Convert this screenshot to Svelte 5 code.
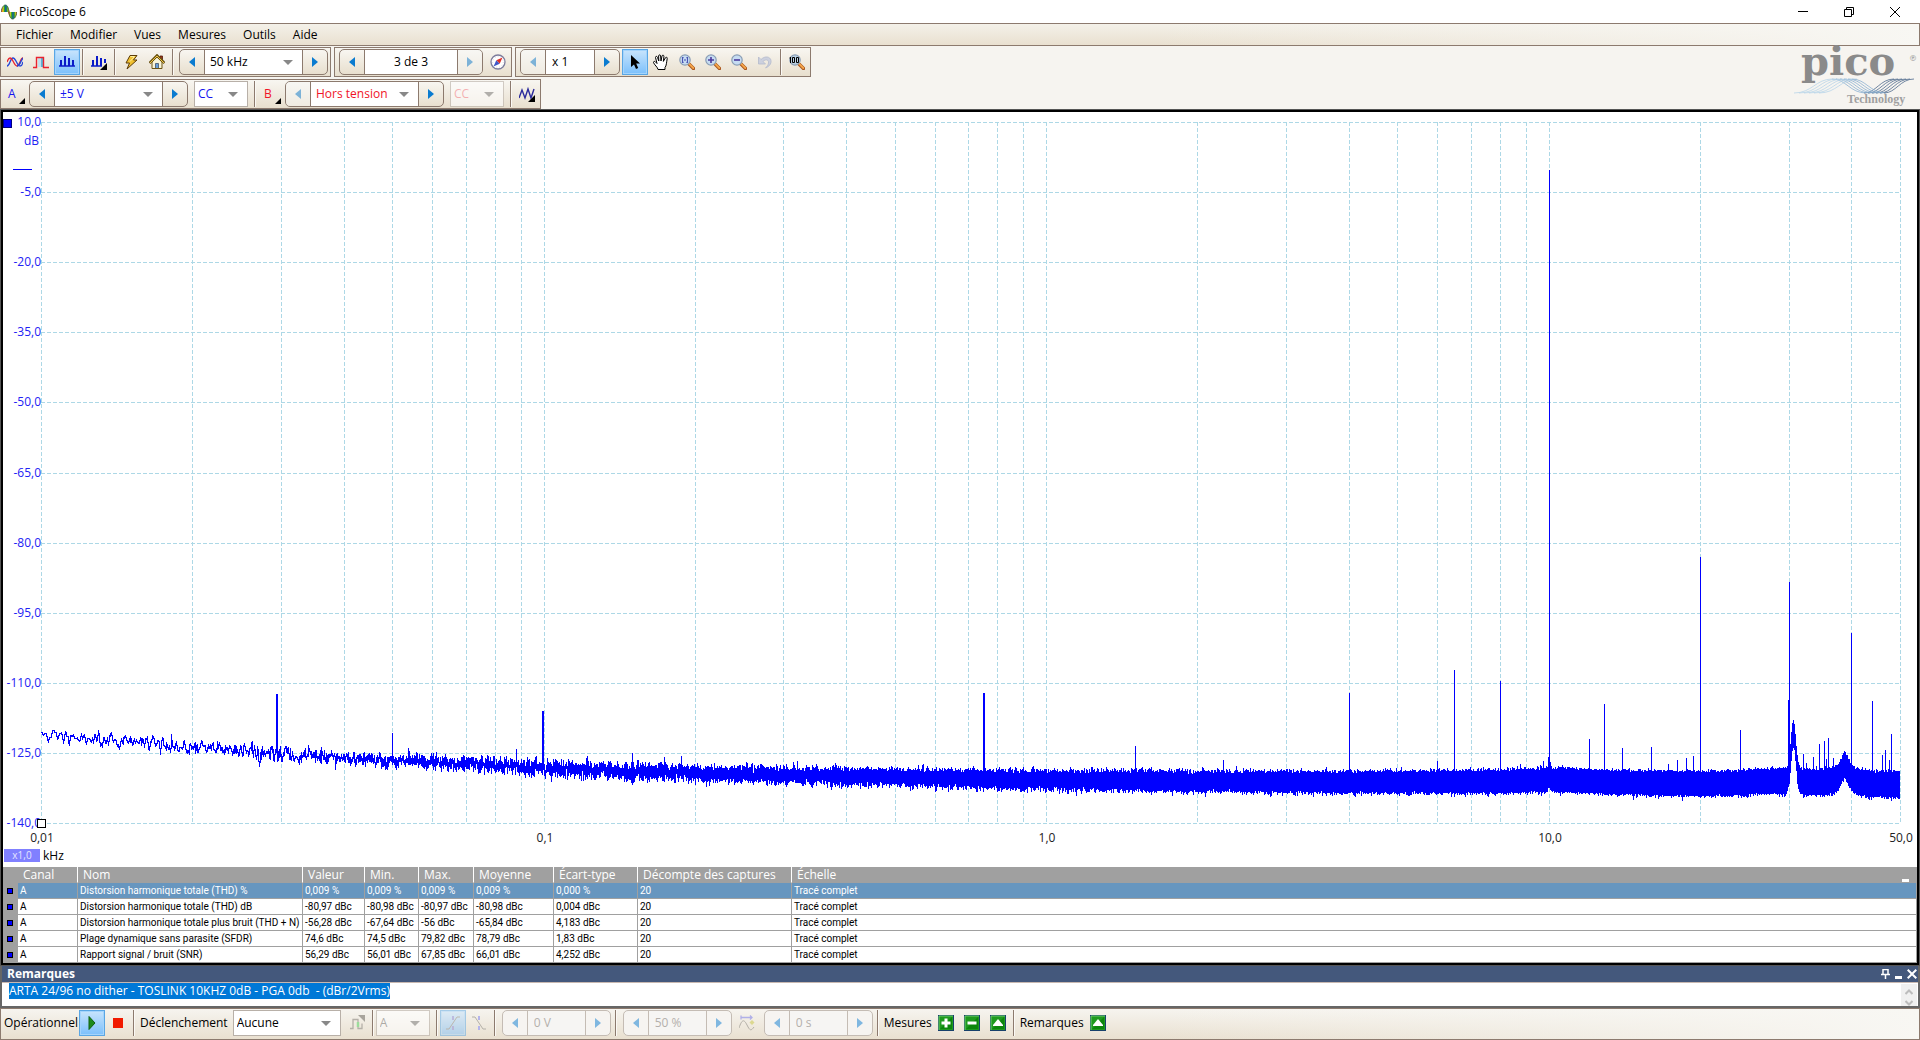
<script>
  import { onMount } from "svelte";

  const menus = ["Fichier", "Modifier", "Vues", "Mesures", "Outils", "Aide"];

  const measurements = [
    ["Distorsion harmonique totale (THD) %", "0,009 %", "0,009 %", "0,009 %", "0,009 %", "0,000 %"],
    ["Distorsion harmonique totale (THD) dB", "-80,97 dBc", "-80,98 dBc", "-80,97 dBc", "-80,98 dBc", "0,004 dBc"],
    ["Distorsion harmonique totale plus bruit (THD + N)", "-56,28 dBc", "-67,64 dBc", "-56 dBc", "-65,84 dBc", "4,183 dBc"],
    ["Plage dynamique sans parasite (SFDR)", "74,6 dBc", "74,5 dBc", "79,82 dBc", "78,79 dBc", "1,83 dBc"],
    ["Rapport signal / bruit (SNR)", "56,29 dBc", "56,01 dBc", "67,85 dBc", "66,01 dBc", "4,252 dBc"],
  ];

  const columns = [
    ["canal", "Canal"],
    ["nom", "Nom"],
    ["valeur", "Valeur"],
    ["min", "Min."],
    ["max", "Max."],
    ["moyenne", "Moyenne"],
    ["ecart", "Écart-type"],
    ["captures", "Décompte des captures"],
  ];

  let remark = $state("ARTA 24/96 no dither - TOSLINK 10KHZ 0dB - PGA 0db  - (dBr/2Vrms)");
  let remarkBox;
  let selectedRow = $state(0);

  // Plot area, in px inside the chart
  const margin = { left: 38, right: 17, top: 10, bottom: 44 };
  let chartWidth = $state(1914);
  let chartHeight = $state(755);

  const F_MIN = 0.01;
  const F_MAX = 50;
  const DB_MAX = 10;
  const DB_MIN = -140;

  let plotWidth = $derived(chartWidth - margin.left - margin.right);
  let plotHeight = $derived(chartHeight - margin.top - margin.bottom);

  const xOf = (f) =>
    margin.left + (Math.log10(f / F_MIN) / Math.log10(F_MAX / F_MIN)) * plotWidth;
  const yOf = (db) => margin.top + ((DB_MAX - db) / (DB_MAX - DB_MIN)) * plotHeight;

  // Centre of the pixel, so that thin lines stay sharp
  const px = (v) => Math.round(v) + 0.5;

  const yTicks = [10, -5, -20, -35, -50, -65, -80, -95, -110, -125, -140];
  const xTicks = [
    [0.01, "0,01"],
    [0.1, "0,1"],
    [1, "1,0"],
    [10, "10,0"],
    [50, "50,0"],
  ];
  const xLines = [];
  for (const decade of [0.01, 0.1, 1, 10]) {
    for (let n = 1; n < 10; n++) {
      if (decade * n <= F_MAX) xLines.push(decade * n);
    }
  }

  // Noise floor: kHz, dB
  const floor = [
    [0.01, -120.6], [0.0117, -121.6], [0.0165, -122.8], [0.02, -123.6], [0.03, -125],
    [0.05, -126.5], [0.068, -127.1], [0.1, -128.1], [0.155, -129], [0.25, -129.4],
    [0.4, -129.9], [0.8, -130.5], [2, -130.9], [5, -131.1], [8, -130.9], [10, -130.6],
    [14, -131.1], [20, -131.4], [24, -131.2], [27.5, -130.8], [31, -131], [36, -131.3], [50, -131.6],
  ];

  // Tones: kHz, dB, line width
  const tones = [
    [0.0294, -112.3, 2], [0.05, -120.7, 1], [0.0883, -124.1, 1], [0.0995, -116, 2], [0.15, -125, 1],
    [0.174, -125.8, 1], [0.188, -125.6, 1], [0.319, -126.7, 1], [0.75, -112.2, 2], [1.5, -123.5, 1],
    [2.25, -126.5, 1], [4, -112.2, 1], [6, -126.7, 1], [6.466, -107.2, 1], [8, -109.6, 1],
    [8.76, -127.3, 1], [9.75, -126.7, 1], [9.96, -125.8, 1], [10, -0.2, 1], [12, -122, 1],
    [12.87, -114.5, 1], [13.98, -123.9, 1], [15.97, -123.7, 1], [17.26, -127.3, 1], [17.98, -126.5, 1],
    [18.74, -126, 1], [19.35, -125.6, 1], [20, -83, 1], [24, -120, 1], [29.9, -113.6, 1],
    [30, -88.4, 1], [32.03, -125.2, 1], [32.48, -127.2, 1], [33.54, -125.8, 1], [34.47, -123.2, 1],
    [35.27, -122.4, 1], [35.59, -126.3, 1], [35.92, -121.8, 1], [36.75, -126, 1], [40, -99.3, 1],
    [43.94, -114, 1], [46, -125.4, 1], [46.64, -124.4, 1], [47.5, -126.5, 1], [47.94, -121, 1],
  ];

  function floorAt(f) {
    let i = 1;
    while (i < floor.length - 1 && floor[i][0] < f) i++;
    const [f0, d0] = floor[i - 1];
    const [f1, d1] = floor[i];
    let db = d0 + ((d1 - d0) * Math.log(f / f0)) / Math.log(f1 / f0);
    db += 0.9 * Math.exp(-Math.pow((f - 10) / 0.09, 2));
    db += 10.2 * Math.exp(-Math.pow((f - 30.62) / 0.5, 2));
    db += 3.9 / (1 + Math.pow((f - 38.72) / 0.9, 2));
    return db;
  }

  // Every FFT bin lands in a pixel column; each column keeps its extremes.
  function buildTrace(width, height) {
    const df = 0.00006;
    const top = new Float64Array(width + 2).fill(Infinity);
    const bottom = new Float64Array(width + 2).fill(-Infinity);
    let seed = 90210;
    const rand = () => {
      seed = (Math.imul(seed, 1664525) + 1013904223) >>> 0;
      return seed / 4294967296;
    };
    let last = 0;
    let prevX = -1;
    let prevY = 0;
    let base = 0;
    let baseX = -1;
    for (let f = F_MIN; f <= F_MAX; f += df) {
      const c = rand() + rand() + rand() + rand() - 2;
      const n = (last * 0.5 + c) * 1.35;
      last = c;
      const x = Math.min(width, Math.floor((Math.log10(f / F_MIN) / Math.log10(F_MAX / F_MIN)) * width));
      if (x !== baseX) {
        base = floorAt(f);
        baseX = x;
      }
      const db = base + (n < 0 ? n * 1.05 : n * 0.95);
      const y = ((DB_MAX - db) / (DB_MAX - DB_MIN)) * height;
      if (prevX >= 0) {
        for (let k = prevX + 1; k < x; k++) {
          const mid = prevY + ((y - prevY) * (k - prevX)) / (x - prevX);
          top[k] = Math.min(top[k], mid);
          bottom[k] = Math.max(bottom[k], mid);
        }
        if (x > prevX) {
          const join = (prevY + y) / 2;
          top[x] = Math.min(top[x], join);
          bottom[x] = Math.max(bottom[x], join);
          top[prevX] = Math.min(top[prevX], join);
          bottom[prevX] = Math.max(bottom[prevX], join);
        }
      }
      top[x] = Math.min(top[x], y);
      bottom[x] = Math.max(bottom[x], y);
      prevX = x;
      prevY = y;
    }
    let d = "";
    for (let x = 0; x < width; x++) {
      if (top[x] === Infinity) continue;
      const y0 = Math.round(top[x]);
      const h = Math.max(1, Math.round(bottom[x]) - y0 + 1);
      d += `M${x + margin.left} ${y0 + margin.top}h1v${h}h-1z`;
    }
    return d;
  }

  let trace = $derived(buildTrace(Math.round(plotWidth), plotHeight));

  const fmt = (v) => v.toFixed(1).replace(".", ",");

  onMount(() => {
    remarkBox.focus();
    remarkBox.select();
  });
</script>

{#snippet arrow(dir)}
  <svg class="arrow" viewBox="0 0 6 10" width="6" height="10">
    <path d={dir === "left" ? "M6 0V10L0 5z" : "M0 0V10L6 5z"} fill="#0a7bd0" />
  </svg>
{/snippet}

{#snippet spin(label, value, size, list, prevOff, nextOff, tone)}
  <div class="spin {size} {tone}" class:off={prevOff && nextOff}>
    <button class:dim={prevOff} aria-label="{label} : précédent" disabled={prevOff}>{@render arrow("left")}</button>
    {#if list}
      <span class="pick">
        <select aria-label={label}><option>{value}</option></select>
      </span>
    {:else}
      <input aria-label={label} {value} disabled={prevOff && nextOff} />
    {/if}
    <button class:dim={nextOff} aria-label="{label} : suivant" disabled={nextOff}>{@render arrow("right")}</button>
  </div>
{/snippet}

{#snippet combo(label, value, size, tone, disabled)}
  <span class="pick boxed {size} {tone}" class:off={disabled}>
    <select aria-label={label} {disabled}><option>{value}</option></select>
  </span>
{/snippet}

{#snippet lens(kind)}
  <svg viewBox="0 0 16 16" width="16" height="16">
    <path d="M9.5 9.5l5 5" stroke="#a8541c" stroke-width="3.4" stroke-linecap="round" />
    <path d="M10 9.6l4.3 4.4" stroke="#f5a64a" stroke-width="1.8" stroke-linecap="round" />
    <circle cx="6" cy="6" r="5.2" fill={kind === "100" ? "#b9cfe2" : "#c6dcf2"} stroke="#8a9db4" stroke-width="1.2" />
    {#if kind === "in"}
      <path d="M6 3v6M3 6h6" stroke="#4b3a9c" stroke-width="1.6" />
    {:else if kind === "out"}
      <path d="M3 6h6" stroke="#4b3a9c" stroke-width="1.6" />
    {:else if kind === "area"}
      <path d="M4.6 3.6H3.5v4.8h1.1M7.4 3.6h1.1v4.8H7.4M6 5v2" fill="none" stroke="#4b56b4" stroke-width="1.1" />
    {:else}
      <path d="M1.5 3v6M0.5 4h1" stroke="#000" fill="none" />
      <path d="M3.5 3.5h2v5h-2zM7.5 3.5h2v5h-2z" fill="none" stroke="#000" />
    {/if}
  </svg>
{/snippet}

{#snippet green(shape)}
  <svg viewBox="0 0 16 16" width="16" height="16">
    <rect x="0.5" y="0.5" width="15" height="15" fill="#1f9a1f" stroke="#17406b" />
    <path d="M1 15V1h14" fill="none" stroke="#6fce6f" />
    <path d="M2 14L14 2v12z" fill="#0c860c" />
    {#if shape === "plus"}
      <path d="M8 3.5v9M3.5 8h9" stroke="#fff" stroke-width="3" />
    {:else if shape === "minus"}
      <path d="M3.5 8h9" stroke="#fff" stroke-width="3" />
    {:else}
      <path d="M8 4l5 6v1H3v-1z" fill="#fff" />
    {/if}
  </svg>
{/snippet}

<div class="app">
  <header class="titlebar">
    <svg viewBox="0 0 16 16" width="16" height="16">
      <defs>
        <linearGradient id="spectrum" x1="0" x2="1">
          <stop offset="0" stop-color="#e02a12" />
          <stop offset="0.25" stop-color="#f0d020" />
          <stop offset="0.42" stop-color="#18a030" />
          <stop offset="0.55" stop-color="#1c50b0" />
          <stop offset="0.7" stop-color="#20a038" />
          <stop offset="0.85" stop-color="#e0c020" />
          <stop offset="1" stop-color="#c02010" />
        </linearGradient>
      </defs>
      <path d="M0 8C1 3 2.500 1 4.500 1S7.500 4 8.500 8z" fill="url(#spectrum)" />
      <path d="M7 8h9c-1 5-2.500 7-4.500 7S8 12 7 8z" fill="url(#spectrum)" />
      <path d="M0 8C1 3 2.500 1 4.500 1s3 3 3.500 7 1.500 7 3.500 7 3.500-2 4.500-7" fill="none" stroke="#286040" stroke-width="0.8" />
    </svg>
    <h1>PicoScope 6</h1>
    <div class="window-buttons">
      <button aria-label="Réduire">
        <svg viewBox="0 0 10 10" width="10" height="10"><path d="M0 4.500h10" stroke="#000" /></svg>
      </button>
      <button aria-label="Restaurer">
        <svg viewBox="0 0 10 10" width="10" height="10">
          <path d="M0.500 2.500h7v7h-7zM2.500 2.500v-2h7v7h-2" fill="none" stroke="#000" />
        </svg>
      </button>
      <button aria-label="Fermer">
        <svg viewBox="0 0 10 10" width="10" height="10"><path d="M0 0l10 10M10 0L0 10" stroke="#000" /></svg>
      </button>
    </div>
  </header>

  <nav class="menubar">
    {#each menus as menu}
      <button>{menu}</button>
    {/each}
  </nav>

  <div class="toolbars">
    <div class="rows">
      <div class="row">
        <div class="group">
          <button class="tool" aria-label="Mode oscilloscope">
            <svg viewBox="0 0 16 16" width="16" height="16" fill="none" stroke-width="1.3">
              <path d="M0 12C3 12 3 4 6 4s4 8 7 8 2-3 3-4" stroke="#2447d8" />
              <path d="M0 8c1-3 2-4 3-4 3 0 4 8 7 8s3-8 6-8" stroke="#e8222e" />
              <path d="M10 12c3 0 3-4 6-8" stroke="#2447d8" />
            </svg>
          </button>
          <button class="tool" aria-label="Mode persistance">
            <svg viewBox="0 0 16 16" width="16" height="16">
              <rect x="5" y="4" width="3" height="9" fill="#bfe0ee" />
              <rect x="8" y="4" width="3" height="9" fill="#5ab4d8" />
              <path d="M0 13.500h3.500V3.500h7v10H16" fill="none" stroke="#e8222e" stroke-width="1.400" />
            </svg>
          </button>
          <button class="tool on" aria-label="Mode spectre">
            <svg viewBox="0 0 16 16" width="16" height="16" fill="none" stroke="#0a1ac8" stroke-width="2">
              <path d="M0 12h16" stroke-width="1.500" /><path d="M2 12V6M6 12V2M10 12V4M14 12V6" />
            </svg>
          </button>
          <i class="sep"></i>
          <button class="tool" aria-label="Options du spectre">
            <svg viewBox="0 0 16 16" width="16" height="16" fill="none" stroke="#0a1ac8" stroke-width="2">
              <path d="M0 12h11" stroke-width="1.500" /><path d="M2 12V6M6 12V2M10 12V4M14 9V5" />
              <path d="M16 9v7H9z" fill="#000" stroke="none" />
            </svg>
          </button>
          <i class="sep"></i>
          <button class="tool" aria-label="Configuration automatique">
            <svg viewBox="0 0 16 16" width="16" height="16">
              <path d="M7 1.500h7L10.500 6H14L4 15l2.500-6H3z" fill="#f0c030" stroke="#5c3c08" stroke-linejoin="round" />
              <path d="M7.500 2.500h4L7 7.500" fill="none" stroke="#fff0a0" />
            </svg>
          </button>
          <button class="tool" aria-label="Accueil">
            <svg viewBox="0 0 16 16" width="16" height="16">
              <path d="M11 2h2.500v5H11z" fill="#a03018" stroke="#50200c" stroke-width="0.800" />
              <path d="M3 8l5-5 5 5v6.500H3z" fill="#f8f4d8" stroke="#6c5414" />
              <path d="M0.500 9L8 1.500 15.500 9" fill="none" stroke="#6c5414" stroke-width="2.600" />
              <path d="M1 9l7-7 7 7" fill="none" stroke="#f0c848" stroke-width="1" />
              <path d="M6.500 14V9.500h3V14" fill="#68a0d8" stroke="#40506c" stroke-width="0.800" />
            </svg>
          </button>
          <i class="sep"></i>
          {@render spin("Plage de fréquences", "50 kHz", "w-range", true, false, false, "")}
        </div>
        <div class="group">
          {@render spin("Tampon", "3 de 3", "w-buffer", false, false, true, "")}
          <button class="tool" aria-label="Navigateur de tampons">
            <svg viewBox="0 0 16 16" width="16" height="16">
              <circle cx="8" cy="8" r="7" fill="#fff" stroke="#7c7c9c" stroke-width="1.300" />
              <circle cx="8" cy="8" r="5.300" fill="none" stroke="#c8c8dc" stroke-width="0.800" stroke-dasharray="1 2" />
              <path d="M12.500 3.500L6.300 6.300l3.400 3.400z" fill="#e03028" />
              <path d="M3.500 12.500l2.800-6.200 3.400 3.400z" fill="#4058c8" />
            </svg>
          </button>
        </div>
        <div class="group">
          {@render spin("Zoom", "x 1", "w-zoom", false, true, false, "")}
          <button class="tool on" aria-label="Sélection">
            <svg viewBox="0 0 16 16" width="16" height="16">
              <path d="M4 1v12l3-2.600 2 4.600 2.200-1-2-4.400H13z" fill="#000" />
            </svg>
          </button>
          <button class="tool" aria-label="Main">
            <svg viewBox="0 0 16 16" width="16" height="16">
              <path d="M5 15.500c0-2-4-5-4.500-7C.5 7 2 7 3 8.500L4 9.500 2.500 3.500c0-1.500 1.700-1.500 2 0L5.800 7 5.600 2c0-1.500 2-1.500 2 0L8 7l1-5c.4-1.400 2-1 1.900.4L10.400 7.400l2-3.600c.8-1.200 2.200-.4 1.800.9C13.500 8 13.500 12 12 13.500v2z" fill="#fff" stroke="#000" stroke-linejoin="round" />
            </svg>
          </button>
          <button class="tool" aria-label="Zoom sur sélection">{@render lens("area")}</button>
          <button class="tool" aria-label="Zoom avant">{@render lens("in")}</button>
          <button class="tool" aria-label="Zoom arrière">{@render lens("out")}</button>
          <button class="tool" aria-label="Annuler le zoom" disabled>
            <svg viewBox="0 0 16 16" width="16" height="16">
              <path d="M1.500 3v7h7L6 7.500C9 4.500 12 6 11.500 9c-.3 2-1.500 3.500-3 5 3.500-1.500 6-4 5.500-7.500C13.300 2.500 8 1.500 4 5.500z" fill="#ccd0de" stroke="#b4bacc" stroke-width="0.800" />
            </svg>
          </button>
          <i class="sep"></i>
          <button class="tool" aria-label="Zoom 100 %">{@render lens("100")}</button>
        </div>
      </div>

      <div class="row">
        <div class="group">
          <button class="tool channel blue">A<i class="corner"></i></button>
          {@render spin("Plage de la voie A", "±5 V", "w-volt", true, false, false, "blue")}
          {@render combo("Couplage de la voie A", "CC", "w-small", "blue spaced", false)}
          <i class="sep"></i>
          <button class="tool channel red">B<i class="corner"></i></button>
          {@render spin("Plage de la voie B", "Hors tension", "w-volt", true, true, false, "red")}
          {@render combo("Couplage de la voie B", "CC", "w-small", "red spaced", true)}
          <i class="sep"></i>
          <button class="tool" aria-label="Voies mathématiques">
            <svg viewBox="0 0 16 16" width="16" height="16">
              <path d="M0 12L3 4l3 8 3-9 3 9 3-9" fill="none" stroke="#2a2a9c" stroke-width="1.400" />
              <path d="M16 9v7H9z" fill="#000" />
            </svg>
          </button>
        </div>
      </div>
    </div>

    <div class="logo">
      <svg viewBox="0 0 126 60" width="126" height="60">
        <g fill="none" stroke-width="0.8">
          {#each [0, 1, 2, 3, 4, 5] as n}
            <path d="M{n * 5} 44c18 0 22-14 38-14" stroke="#b8d4e8" />
            <path d="M{38 + n * 4} 30c14 0 18 14 34 14" stroke="#8cb0d0" />
            <path d="M{70 + n * 4} 44c12 0 16-14 30-14" stroke="#4c688c" />
          {/each}
        </g>
        <text x="7" y="26" class="brand">pico</text>
        <text x="115" y="12" class="mark">®</text>
        <text x="53" y="54" class="sub">Technology</text>
      </svg>
    </div>
  </div>

  <main class="frame">
    <div class="chart" bind:clientWidth={chartWidth} bind:clientHeight={chartHeight}>
      <svg width={chartWidth} height={chartHeight} role="img" aria-label="Spectre">
        <g class="grid">
          {#each yTicks as db}
            <line x1={margin.left} x2={chartWidth - margin.right} y1={px(yOf(db))} y2={px(yOf(db))} />
          {/each}
          {#each [...xLines, F_MAX] as f}
            <line x1={px(xOf(f))} x2={px(xOf(f))} y1={margin.top} y2={chartHeight - margin.bottom} />
          {/each}
        </g>
        <path class="trace" d={trace} />
        {#each tones as [f, db, w]}
          <rect
            class="trace"
            x={Math.round(xOf(f))}
            y={Math.round(yOf(db))}
            width={w}
            height={Math.max(1, Math.round(yOf(floorAt(f)) - yOf(db)))}
          />
        {/each}
        {#each yTicks as db}
          <text class="y-label" x={margin.left} y={Math.round(yOf(db)) + 4}>{fmt(db)}</text>
        {/each}
        <text class="y-label" x={margin.left - 2} y={margin.top + 23}>dB</text>
        {#each xTicks as [f, label]}
          <text class="x-label" x={Math.round(xOf(f)) + 1} y={chartHeight - 25}>{label}</text>
        {/each}
        <line class="zero" x1="10" x2="29" y1={px(yOf(0))} y2={px(yOf(0))} />
        <rect class="handle-a" x="0.5" y={margin.top - 2.5} width="8" height="8" />
        <rect class="handle" x={margin.left - 3.5} y={chartHeight - margin.bottom - 3.5} width="8" height="8" />
        <rect x="1" y={chartHeight - 18} width="36" height="13" fill="#8080ff" />
        <text class="scale" x="19" y={chartHeight - 8}>x1,0</text>
        <text class="unit" x="40" y={chartHeight - 7}>kHz</text>
      </svg>
    </div>

    <table>
      <thead>
        <tr>
          <th class="marker"></th>
          {#each columns as [name, title]}
            <th class={name}>{title}</th>
          {/each}
          <th class="echelle">
            <div class="last">Échelle <button aria-label="Réduire les mesures"></button></div>
          </th>
        </tr>
      </thead>
      <tbody>
        {#each measurements as row, i}
          <tr class:selected={i === selectedRow} onclick={() => (selectedRow = i)}>
            <td class="marker"><i></i></td>
            <td>A</td>
            {#each row as cell}
              <td>{cell}</td>
            {/each}
            <td>20</td>
            <td>Tracé complet</td>
          </tr>
        {/each}
      </tbody>
    </table>
  </main>

  <section class="remarks">
    <div class="remarks-head">
      <h2><label for="remark">Remarques</label></h2>
      <button aria-label="Épingler">
        <svg viewBox="0 0 9 10" width="9" height="10">
          <path d="M2 5V.5h5V5M0 5.500h9M4.500 5v5" fill="none" stroke="#fff" stroke-width="1.500" />
        </svg>
      </button>
      <button aria-label="Réduire les remarques">
        <svg viewBox="0 0 9 10" width="9" height="10"><path d="M1 7h7v3H1z" fill="#fff" /></svg>
      </button>
      <button aria-label="Fermer les remarques">
        <svg viewBox="0 0 10 10" width="10" height="10">
          <path d="M.7.7l8.600 8.600M9.300.7L.7 9.300" stroke="#fff" stroke-width="2" />
        </svg>
      </button>
    </div>
    <div class="remarks-body">
      <textarea id="remark" rows="1" spellcheck="false" bind:this={remarkBox} bind:value={remark}></textarea>
      <div class="scroller">
        <svg viewBox="0 0 8 6" width="8" height="6"><path d="M.5 5L4 1.500 7.500 5" /></svg>
        <svg viewBox="0 0 8 6" width="8" height="6"><path d="M.5 1L4 4.500 7.500 1" /></svg>
      </div>
    </div>
  </section>

  <footer class="statusbar">
    <span class="text">Opérationnel</span>
    <button class="tool on" aria-label="Démarrer">
      <svg viewBox="0 0 16 16" width="16" height="16">
        <path d="M5 1.500v13l6-6.500z" fill="#1c8a1c" stroke="#106010" />
      </svg>
    </button>
    <button class="tool" aria-label="Arrêter">
      <svg viewBox="0 0 16 16" width="16" height="16"><path d="M3 3h10v10H3z" fill="#f11a00" /></svg>
    </button>
    <i class="sep"></i>
    <label class="text" for="trigger">Déclenchement</label>
    <span class="pick boxed w-trigger">
      <select id="trigger"><option>Aucune</option></select>
    </span>
    <button class="tool" aria-label="Déclenchement avancé" disabled>
      <svg viewBox="0 0 16 16" width="16" height="16" fill="none">
        <path d="M9 0h7v7z" fill="#a8a49c" />
        <path d="M1 13.500h3v-9h5v9h4v-5" stroke="#b4b0a8" stroke-width="1.300" />
        <path d="M9 7v5" stroke="#9cdc9c" stroke-width="2.500" />
      </svg>
    </button>
    <i class="sep"></i>
    {@render combo("Source de déclenchement", "A", "w-small", "", true)}
    <i class="sep wide"></i>
    <button class="tool on faded" aria-label="Front montant" disabled>
      <svg viewBox="0 0 16 16" width="16" height="16" fill="none">
        <path d="M1 14h3l8-12h3" stroke="#88847c" /><path d="M8 1v4M8 11v4" stroke="#8888d8" stroke-width="2" />
      </svg>
    </button>
    <button class="tool" aria-label="Front descendant" disabled>
      <svg viewBox="0 0 16 16" width="16" height="16" fill="none">
        <path d="M1 2h3l8 12h3" stroke="#b4b0a8" /><path d="M8 1v4M8 11v4" stroke="#b4b4ec" stroke-width="2" />
      </svg>
    </button>
    <i class="sep"></i>
    {@render spin("Seuil", "0 V", "w-level", false, true, true, "")}
    <i class="sep"></i>
    {@render spin("Pré-déclenchement", "50 %", "w-level", false, true, true, "")}
    <button class="tool" aria-label="Délai après déclenchement" disabled>
      <svg viewBox="0 0 16 16" width="16" height="16" fill="none">
        <path d="M2 2.500h11M2 .5v4M11 .5l2 2-2 2" stroke="#b0b0e8" stroke-width="1.300" />
        <path d="M0 13c3-9 5-9 8-3s4 6 7 2" stroke="#b4b0a8" />
        <path d="M13 5l2.500 2.500L13 10l-2.500-2.500z" fill="#dcd890" />
      </svg>
    </button>
    {@render spin("Délai", "0 s", "w-level", false, true, true, "")}
    <i class="sep"></i>
    <span class="text">Mesures</span>
    <button class="tool" aria-label="Ajouter une mesure">{@render green("plus")}</button>
    <button class="tool" aria-label="Supprimer une mesure">{@render green("minus")}</button>
    <button class="tool" aria-label="Afficher les mesures">{@render green("up")}</button>
    <i class="sep"></i>
    <span class="text">Remarques</span>
    <button class="tool" aria-label="Afficher les remarques">{@render green("up")}</button>
  </footer>
</div>

<style>
  :global(body) {
    margin: 0;
    background: #f6f4f0;
  }

  .app {
    display: flex;
    flex-direction: column;
    min-height: 100vh;
    color: #000;
    font: 12px/16px "Open Sans", "Noto Sans", sans-serif;
  }

  button,
  select,
  input,
  textarea {
    box-sizing: border-box;
    margin: 0;
    padding: 0;
    border: 0;
    border-radius: 0;
    outline: 0;
    background: none;
    color: inherit;
    font: inherit;
  }

  svg {
    display: block;
    flex: none;
  }

  .titlebar {
    display: flex;
    align-items: center;
    height: 23px;
    padding: 0 18px 0 1px;
    background: #fff;
  }

  h1,
  h2 {
    margin: 0;
    font: inherit;
  }

  h1 {
    padding-left: 2px;
  }

  .window-buttons {
    display: flex;
    margin-left: auto;
  }

  .window-buttons button {
    display: flex;
    justify-content: flex-end;
    width: 46px;
    padding-right: 2px;
  }

  .menubar {
    display: flex;
    gap: 17px;
    box-sizing: border-box;
    height: 23px;
    padding-left: 15px;
    border: 1px solid #8c7a6e;
    background: linear-gradient(100deg, transparent 60%, #f8f7f3 100%), linear-gradient(#f4f1e9, #e9e0d0);
  }

  .toolbars {
    display: flex;
    justify-content: space-between;
    padding-top: 1px;
    background: #f6f4f0;
  }

  .row {
    display: flex;
    gap: 3px;
    height: 30px;
  }

  .row + .row {
    margin-top: 2px;
  }

  .group {
    display: flex;
    align-items: center;
    box-sizing: border-box;
    padding: 1px 0 1px 1px;
    border: 1px solid #8c7a6e;
    background: linear-gradient(#f8f6f1, #e8dfce);
  }

  .tool {
    display: flex;
    align-items: center;
    justify-content: center;
    flex: none;
    width: 26px;
    height: 26px;
  }

  .on {
    border: 1px solid #5aa6e4;
    background: linear-gradient(#c8e4fc, #7cc0fc);
    box-shadow: inset 0 0 0 1px #a4d4fc;
  }

  .faded {
    opacity: 0.5;
  }

  .sep {
    flex: none;
    width: 1px;
    height: 26px;
    margin: 0 3px 0 2px;
    background: #8c7a6e;
    box-shadow: 1px 0 #fbf9f5;
  }

  .sep.wide {
    margin-left: 6px;
  }

  .blue {
    color: #1414f0;
  }

  .red {
    color: #f01428;
  }

  .channel {
    position: relative;
    justify-content: flex-start;
    width: 24px;
    padding-left: 6px;
  }

  .corner {
    position: absolute;
    right: 1px;
    bottom: 3px;
    border: 3px solid #000;
    border-top-color: transparent;
    border-left-color: transparent;
  }

  .spin {
    display: flex;
    box-sizing: border-box;
    height: 26px;
    margin: 0 2px 0 3px;
    border: 1px solid #8c7a6e;
    border-radius: 5px;
    background: linear-gradient(#f8f6f1, #e8dfce);
    overflow: hidden;
  }

  .spin button {
    display: flex;
    align-items: center;
    justify-content: center;
    flex: none;
    width: 24px;
  }

  .spin button.dim {
    opacity: 0.5;
    background: #f8f7f5;
  }

  .spin.off {
    border-color: #c4bcb4;
    background: #f6f4f1;
    color: #b4b0ac;
  }

  .spin.off button.dim {
    background: none;
  }

  .spin .pick,
  .spin input {
    flex: 1;
    min-width: 0;
    border: solid #8c7a6e;
    border-width: 0 1px;
    background: #fff;
  }

  .spin.off input {
    border-color: #c4bcb4;
    background: #f6f5f3;
  }

  .spin input {
    padding-left: 6px;
  }

  .w-buffer input {
    padding: 0;
    text-align: center;
  }

  .pick {
    display: flex;
    position: relative;
  }

  .pick::after {
    content: "";
    position: absolute;
    top: 10px;
    right: 9px;
    border: solid transparent;
    border-width: 5px 5px 0;
    border-top-color: #888;
    pointer-events: none;
  }

  .pick select {
    flex: 1;
    min-width: 0;
    padding-left: 5px;
    appearance: none;
    opacity: 1;
  }

  .boxed {
    box-sizing: border-box;
    height: 26px;
    border: 1px solid #b8b0a8;
    background: #fff;
  }

  .boxed.off {
    opacity: 0.6;
  }

  .boxed.off select {
    opacity: 0.5;
  }

  .boxed select {
    padding-left: 3px;
  }

  .spaced {
    margin: 0 4px;
  }

  .w-range {
    width: 149px;
  }

  .w-buffer {
    width: 144px;
  }

  .w-zoom {
    width: 100px;
  }

  .w-volt {
    width: 159px;
  }

  .w-level {
    width: 109px;
  }

  .w-small {
    width: 54px;
  }

  .w-trigger {
    width: 108px;
    margin: 0 3px 0 4px;
  }

  .logo {
    padding-top: 2px;
  }

  .logo svg {
    overflow: visible;
  }

  .logo text {
    fill: #8a8a8a;
    font-family: "DejaVu Serif", serif;
  }

  .logo .brand {
    font-size: 40px;
    font-weight: bold;
  }

  .logo .mark {
    font-size: 8px;
  }

  .logo .sub {
    font: bold 12px "Liberation Serif", serif;
    fill: #a0a0a0;
  }

  .frame {
    display: flex;
    flex-direction: column;
    flex: 1;
    border: 1px solid #555;
    box-shadow: inset 0 0 0 2px #000;
    padding: 2px;
    background: #fff;
  }

  .chart {
    position: relative;
    flex: 1;
    min-height: 300px;
    overflow: hidden;
  }

  .chart svg {
    position: absolute;
    inset: 0;
    font-size: 12px;
  }

  .grid line {
    stroke: #add8e6;
    stroke-dasharray: 4 2;
    shape-rendering: crispEdges;
  }

  .trace {
    fill: #00f;
    shape-rendering: crispEdges;
  }

  .y-label {
    fill: #2222f4;
    text-anchor: end;
  }

  .x-label {
    fill: #222;
    text-anchor: middle;
  }

  .zero {
    stroke: #00f;
    shape-rendering: crispEdges;
  }

  .handle-a {
    fill: #00f;
    stroke: #000080;
    shape-rendering: crispEdges;
  }

  .handle {
    fill: #fff;
    stroke: #000;
    shape-rendering: crispEdges;
  }

  .scale {
    fill: #e4e4ff;
    font-size: 10px;
    text-anchor: middle;
  }

  table {
    width: 100%;
    border-spacing: 0;
    table-layout: fixed;
    background: #fff;
    font-size: 10px;
    line-height: 15px;
  }

  th,
  td {
    box-sizing: border-box;
    height: 16px;
    padding: 0 0 0 2px;
    border-right: 1px solid #a0a0a0;
    border-bottom: 1px solid #a0a0a0;
    text-align: left;
    white-space: nowrap;
    overflow: hidden;
  }

  td {
    font-family: Roboto, "Open Sans", sans-serif;
  }

  th {
    padding-left: 5px;
    border-right-color: #fff;
    background: #a0a0a0;
    color: #fff;
    font-size: 12px;
    font-weight: normal;
  }

  th.marker,
  th.echelle {
    border-right-color: #a0a0a0;
  }

  td.marker {
    border-color: #a0a0a0;
    background: #a0a0a0;
  }

  td.marker i {
    display: block;
    width: 4px;
    height: 4px;
    margin-left: 2px;
    border: 1px solid #000;
    background: #00f;
  }

  .selected td {
    background: #6796bf;
    color: #fff;
  }

  .selected td.marker {
    background: #a0a0a0;
  }

  .marker {
    width: 15px;
  }

  .canal {
    width: 60px;
  }

  .nom {
    width: 225px;
  }

  .valeur {
    width: 62px;
  }

  .min {
    width: 54px;
  }

  .max {
    width: 55px;
  }

  .moyenne {
    width: 80px;
  }

  .ecart {
    width: 84px;
  }

  .captures {
    width: 154px;
  }

  .last {
    display: flex;
    justify-content: space-between;
    align-items: flex-end;
  }

  .last button {
    width: 7px;
    height: 3px;
    margin-right: 7px;
    background: #fff;
  }

  .remarks {
    border: solid #666;
    border-width: 0 2px 2px;
  }

  .remarks-head {
    display: flex;
    align-items: center;
    gap: 4px;
    height: 16px;
    padding: 0 1px 0 5px;
    background: #44587c;
    color: #fff;
    line-height: 14px;
  }

  .remarks-head h2 {
    margin-right: auto;
    font-weight: bold;
  }

  .remarks-body {
    display: flex;
    height: 23px;
    border-top: 1px solid #c8b8b0;
    background: #fff;
  }

  textarea {
    flex: 1;
    padding: 0 7px;
    resize: none;
    overflow: hidden;
  }

  textarea::selection {
    background: #0078d7;
    color: #fff;
  }

  .scroller {
    display: flex;
    flex-direction: column;
    align-items: center;
    justify-content: space-between;
    width: 16px;
    padding-top: 5px;
    margin: 1px 1px 0 0;
    background: #f0f0f0;
  }

  .scroller path {
    fill: none;
    stroke: #bcbcbc;
    stroke-width: 2;
  }

  .statusbar {
    display: flex;
    align-items: center;
    box-sizing: border-box;
    height: 32px;
    padding-bottom: 2px;
    border: 1px solid #8c7a6e;
    background: linear-gradient(100deg, transparent 60%, #f8f7f3 100%), linear-gradient(#f6f4ef, #e9e0d0);
    white-space: nowrap;
  }

  .statusbar .spin {
    margin-left: 4px;
  }

  .text {
    padding: 0 1px 0 3px;
  }
</style>
